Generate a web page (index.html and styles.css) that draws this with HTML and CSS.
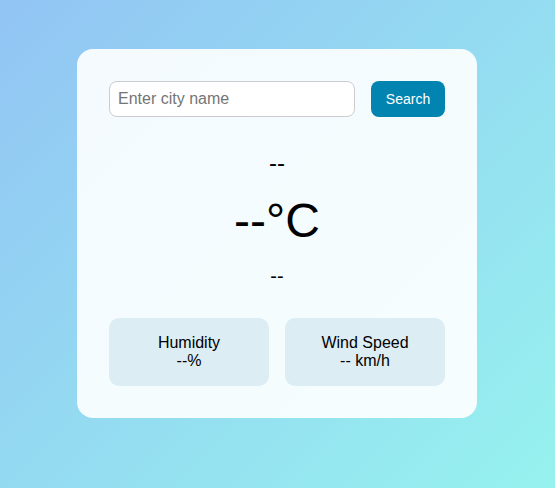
FILE: index.html
```html
<!DOCTYPE html>
<html lang="en">
<head>
<meta charset="utf-8">
<title>Weather</title>
<link rel="stylesheet" href="styles.css">
</head>
<body>
<div class="card">
  <div class="search-row">
    <input class="city-input" type="text" placeholder="Enter city name">
    <button class="search-btn">Search</button>
  </div>
  <h2 class="city">--</h2>
  <div class="temp">--°C</div>
  <p class="desc">--</p>
  <div class="stats">
    <div class="stat">
      <div>Humidity</div>
      <div>--%</div>
    </div>
    <div class="stat">
      <div>Wind Speed</div>
      <div>-- km/h</div>
    </div>
  </div>
</div>
</body>
</html>
```
FILE: styles.css
```css
html, body {
  margin: 0;
  height: 100%;
}
body {
  font-family: "Liberation Sans", Arial, sans-serif;
  background: linear-gradient(135deg, #92c4f4, #96f2ee);
  padding: 49px 1px 0 0;
  box-sizing: border-box;
  color: #000;
}
.card {
  width: 400px;
  box-sizing: border-box;
  margin: 0 auto;
  padding: 32px;
  background: rgba(255, 255, 255, 0.9);
  border-radius: 16px;
  text-align: center;
}
.search-row {
  display: flex;
  gap: 16px;
}
.city-input {
  flex: 1;
  min-width: 0;
  height: 36px;
  box-sizing: border-box;
  border: 1px solid #ccc;
  border-radius: 8px;
  padding: 0 8px;
  font-family: "Liberation Sans", Arial, sans-serif;
  font-size: 16px;
  background: #fff;
  outline: none;
}
.city-input::placeholder {
  color: #757575;
}
.search-btn {
  height: 36px;
  width: 74px;
  padding: 0;
  border: none;
  border-radius: 8px;
  background: #0284b1;
  color: #fff;
  font-family: "Liberation Sans", Arial, sans-serif;
  font-size: 14px;
}
.city {
  margin: 32px 0 0;
  font-size: 24px;
  font-weight: normal;
}
.temp {
  margin-top: 16px;
  font-size: 48px;
}
.desc {
  margin: 17px 0 0;
  font-size: 20px;
}
.stats {
  margin-top: 30px;
  display: grid;
  grid-template-columns: 1fr 1fr;
  gap: 16px;
}
.stat {
  background: #dcedf4;
  border-radius: 10px;
  padding: 16px 10px;
  font-size: 16px;
}
```
